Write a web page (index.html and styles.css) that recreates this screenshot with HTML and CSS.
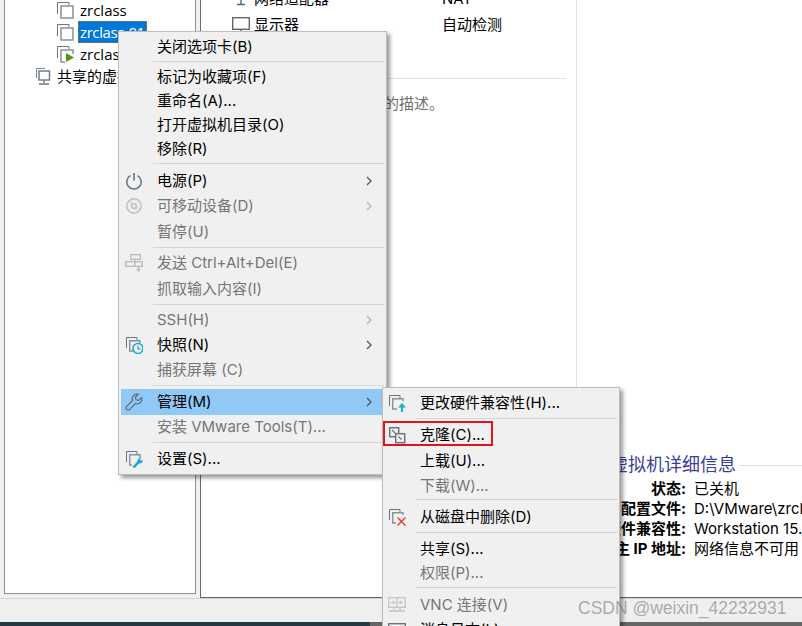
FILE: index.html
```html
<!DOCTYPE html>
<html lang="zh-CN">
<head>
<meta charset="utf-8">
<title>VMware Workstation</title>
<link rel="stylesheet" href="styles.css">
</head>
<body>
<svg class="defs" xmlns="http://www.w3.org/2000/svg">
  <symbol id="i-vm" viewBox="0 0 18 18"><path d="M1.5 13V1.5H13V4" fill="none" stroke="#6b7780"/><rect x="5" y="5" width="12" height="12" fill="#fff" stroke="#87929a" stroke-width="1.5"/></symbol>
  <symbol id="i-run" viewBox="0 0 18 18"><path d="M1.5 13V1.5H13V4" fill="none" stroke="#6b7780"/><path d="M9 17H5V5H17V9" fill="none" stroke="#87929a" stroke-width="1.5"/><path d="M10 8L18 12.5 10 17z" fill="#4f9a14"/></symbol>
  <symbol id="i-share" viewBox="0 0 18 18"><path d="M1.5 11V1.5H10" fill="none" stroke="#7b868e"/><rect x="4" y="4" width="10.5" height="9" fill="#fff" stroke="#6b7780" stroke-width="1.4"/><path d="M9 13v3M4 17h10" fill="none" stroke="#6b7780" stroke-width="1.4"/></symbol>
  <symbol id="i-mon" viewBox="0 0 18 18"><rect x=".7" y="1.7" width="16.6" height="11.6" fill="#fff" stroke="#5c6870" stroke-width="1.4"/><path d="M9 13v3M5 16.5h8" fill="none" stroke="#5c6870" stroke-width="1.4"/></symbol>
  <symbol id="i-net" viewBox="0 0 18 18"><path d="M1 4h16M4 7h10" fill="none" stroke="#6b7780" stroke-width="1.4" stroke-dasharray="2 1"/><path d="M9 8v6M5 14.5h8" fill="none" stroke="#5c6870" stroke-width="1.4"/></symbol>
  <symbol id="i-power" viewBox="0 0 18 18"><path d="M5.4 3.6a7.2 7.2 0 1 0 7.2 0M9 1v7.5" fill="none" stroke="#5f6e78" stroke-width="1.5"/></symbol>
  <symbol id="i-disc" viewBox="0 0 18 18"><circle cx="9" cy="9" r="7.2" fill="none" stroke="#bdbdbd" stroke-width="1.5"/><circle cx="9" cy="9" r="2.4" fill="none" stroke="#bdbdbd" stroke-width="1.4"/><path d="M5 8a4 4 0 0 1 3-3M13 10a4 4 0 0 1-3 3" fill="none" stroke="#d0d0d0"/></symbol>
  <symbol id="i-send" viewBox="0 0 18 18"><g fill="none" stroke="#bdbdbd" stroke-width="1.4"><rect x="5.7" y=".7" width="9.6" height="4.6"/><rect x=".7" y="7.7" width="9" height="4.6"/><rect x="9.7" y="7.7" width="7.6" height="4.6"/><path d="M10.500 5.500v2M13.500 12.500v4.500"/></g><path d="M11 15l2.500 3 2.500-3z" fill="#bdbdbd"/></symbol>
  <symbol id="i-snap" viewBox="0 0 18 18"><path d="M1.500 12V1.500H12V4" fill="none" stroke="#6b7780"/><path d="M8 15H4.700V4.700H15V7" fill="none" stroke="#87929a" stroke-width="1.400"/><circle cx="13" cy="12.500" r="5" fill="#f0f0f0" stroke="#1ba6d8" stroke-width="1.600"/><path d="M13 9.800v3h2.500" fill="none" stroke="#1ba6d8" stroke-width="1.200"/></symbol>
  <symbol id="i-wrench" viewBox="0 0 18 18"><path d="M12 1.200a4.700 4.700 0 0 0-4.500 6.300L1.700 13.300a2.100 2.100 0 0 0 3 3l5.800-5.800a4.700 4.700 0 0 0 6-6L13.600 7.400 11 6.800 10.400 4.200 13.300 1.400a4.700 4.700 0 0 0-1.300-.2z" fill="none" stroke="#5d6c76" stroke-width="1.200"/></symbol>
  <symbol id="i-set" viewBox="0 0 18 18"><path d="M1.500 12V1.500H12V4" fill="none" stroke="#6b7780"/><path d="M7 15H4.700V4.700H15V8" fill="none" stroke="#87929a" stroke-width="1.400"/><path d="M8.500 17.500l5-5.500" fill="none" stroke="#1ba6d8" stroke-width="2.600"/><path d="M12 12.500l1-3.500 3.500-1.500-1.500 2 1 1.200 2-1-1 3-3.500 1z" fill="#1ba6d8"/></symbol>
  <symbol id="i-up" viewBox="0 0 18 18"><path d="M1.500 12V1.500H12V4" fill="none" stroke="#6b7780"/><path d="M9 15H4.700V4.700H15V7" fill="none" stroke="#87929a" stroke-width="1.400"/><path d="M14 18v-6" fill="none" stroke="#19b0d8" stroke-width="2"/><path d="M10 13.500l4-4.500 4 4.500z" fill="#19b0d8"/></symbol>
  <symbol id="i-clone" viewBox="0 0 18 18"><g fill="#f0f0f0" stroke="#6a767e" stroke-width="1.500"><rect x="1.700" y="1.700" width="9" height="9"/><rect x="7.700" y="7.700" width="9" height="9"/></g><path d="M4 4l3 3M10.500 10.500l3 3" fill="none" stroke="#6a767e" stroke-width="1.300"/></symbol>
  <symbol id="i-del" viewBox="0 0 18 18"><path d="M1.500 12V1.500H12V4" fill="none" stroke="#6b7780"/><path d="M8 15H4.700V4.700H15V7" fill="none" stroke="#87929a" stroke-width="1.400"/><path d="M9.500 9.500l8 8M17.500 9.500l-8 8" fill="none" stroke="#e2453c" stroke-width="1.500"/></symbol>
  <symbol id="i-vnc" viewBox="0 0 18 18"><g fill="none" stroke="#c4c4c4" stroke-width="1.300"><rect x=".7" y="1.700" width="16.600" height="9.600"/><path d="M9 2v9M3 6.500h4M11 6.500h4M1 15h16M6 11v4M12 11v4"/></g><path d="M7.500 6.500L5 4.500v4zM10.500 6.500L13 4.500v4z" fill="#c4c4c4"/></symbol>
  <symbol id="i-log" viewBox="0 0 18 18"><rect x=".7" y="2.700" width="16.600" height="14" fill="none" stroke="#6b7780" stroke-width="1.400"/></symbol>
</svg>

<div class="app">
  <div class="panes">
    <nav class="tree">
      <div class="node vm"><svg class="ico"><use href="#i-vm"/></svg><span class="label">zrclass</span></div>
      <div class="node vm"><svg class="ico"><use href="#i-vm"/></svg><span class="label selected">zrclass-01</span></div>
      <div class="node vm"><svg class="ico"><use href="#i-run"/></svg><span class="label">zrclass-02</span></div>
      <div class="node shared"><svg class="ico"><use href="#i-share"/></svg><span class="label">共享的虚拟机</span></div>
    </nav>
    <main class="detail">
      <section class="summary">
        <div class="spec"><svg class="ico"><use href="#i-net"/></svg><span class="spec-name">网络适配器</span><span>NAT</span></div>
        <div class="spec"><svg class="ico"><use href="#i-mon"/></svg><span class="spec-name">显示器</span><span>自动检测</span></div>
        <hr class="rule">
        <p class="desc">在此处键入对该虚拟机的描述。</p>
      </section>
      <section class="info">
        <div class="info-head"><h2>虚拟机详细信息</h2><span class="info-line"></span></div>
        <dl class="info-grid">
          <dt>状态:</dt><dd>已关机</dd>
          <dt>配置文件:</dt><dd>D:\VMware\zrclass-01\zrclass-01.vmx</dd>
          <dt>硬件兼容性:</dt><dd>Workstation 15.x 虚拟机</dd>
          <dt>主 IP 地址:</dt><dd>网络信息不可用</dd>
        </dl>
      </section>
    </main>
  </div>
  <footer class="status"></footer>
  <div class="taskbar"></div>
</div>

<ul class="menu main-menu">
  <li class="item"><span class="slot"></span>关闭选项卡(B)</li>
  <li class="sep"></li>
  <li class="item"><span class="slot"></span>标记为收藏项(F)</li>
  <li class="item"><span class="slot"></span>重命名(A)...</li>
  <li class="item"><span class="slot"></span>打开虚拟机目录(O)</li>
  <li class="item"><span class="slot"></span>移除(R)</li>
  <li class="sep roomy"></li>
  <li class="item t25h"><span class="slot"><svg class="ico"><use href="#i-power"/></svg></span>电源(P)<svg class="chev" viewBox="0 0 6 10"><path d="M1 1l4 4-4 4"/></svg></li>
  <li class="item t25h off"><span class="slot"><svg class="ico"><use href="#i-disc"/></svg></span>可移动设备(D)<svg class="chev" viewBox="0 0 6 10"><path d="M1 1l4 4-4 4"/></svg></li>
  <li class="item t25h off"><span class="slot"></span>暂停(U)</li>
  <li class="sep"></li>
  <li class="item t25h off"><span class="slot"><svg class="ico"><use href="#i-send"/></svg></span>发送 Ctrl+Alt+Del(E)</li>
  <li class="item t25h off"><span class="slot"></span>抓取输入内容(I)</li>
  <li class="sep"></li>
  <li class="item t25 off"><span class="slot"></span>SSH(H)<svg class="chev" viewBox="0 0 6 10"><path d="M1 1l4 4-4 4"/></svg></li>
  <li class="item t25"><span class="slot"><svg class="ico"><use href="#i-snap"/></svg></span>快照(N)<svg class="chev" viewBox="0 0 6 10"><path d="M1 1l4 4-4 4"/></svg></li>
  <li class="item t25 off"><span class="slot"></span>捕获屏幕 (C)</li>
  <li class="sep"></li>
  <li class="item t26 hover"><span class="slot"><svg class="ico"><use href="#i-wrench"/></svg></span>管理(M)<svg class="chev" viewBox="0 0 6 10"><path d="M1 1l4 4-4 4"/></svg></li>
  <li class="item t25 off"><span class="slot"></span>安装 VMware Tools(T)...</li>
  <li class="sep"></li>
  <li class="item t26"><span class="slot"><svg class="ico"><use href="#i-set"/></svg></span>设置(S)...</li>
</ul>

<ul class="menu sub-menu">
  <li class="item"><span class="slot"><svg class="ico"><use href="#i-up"/></svg></span>更改硬件兼容性(H)...</li>
  <li class="sep"></li>
  <li class="item t25"><span class="slot"><svg class="ico"><use href="#i-clone"/></svg></span>克隆(C)...</li>
  <li class="item t26 nudge"><span class="slot"></span>上载(U)...</li>
  <li class="item t23 off nudge"><span class="slot"></span>下载(W)...</li>
  <li class="sep"></li>
  <li class="item t26 nudge"><span class="slot"><svg class="ico"><use href="#i-del"/></svg></span>从磁盘中删除(D)</li>
  <li class="sep"></li>
  <li class="item nudge"><span class="slot"></span>共享(S)...</li>
  <li class="item off nudge"><span class="slot"></span>权限(P)...</li>
  <li class="sep"></li>
  <li class="item t26 off nudge"><span class="slot"><svg class="ico"><use href="#i-vnc"/></svg></span>VNC 连接(V)</li>
  <li class="item nudge"><span class="slot"><svg class="ico"><use href="#i-log"/></svg></span>消息日志(L)</li>
  <li class="callout"></li>
</ul>

<div class="watermark">CSDN @weixin_42232931</div>
</body>
</html>
```

FILE: styles.css
```css
* { box-sizing: border-box; }
html, body { margin: 0; height: 626px; overflow: hidden; }
body {
  position: relative;
  background: #f0f0f0;
  color: #000;
  font: 15px/22px Inter, "Noto Sans CJK SC", sans-serif;
}
.defs { display: none; }
.ico { display: block; width: 18px; height: 18px; flex: none; }

.app { display: flex; flex-direction: column; height: 626px; }
.panes { display: flex; height: 598px; padding-left: 4px; overflow: hidden; flex: none; }

.tree {
  width: 192px;
  height: 594px;
  margin-right: 4px;
  border: 1px solid #8b9197;
  border-top: 0;
  background: #fff;
  overflow: hidden;
  font-family: "Open Sans", "Noto Sans CJK SC", sans-serif;
}
.node { display: flex; align-items: center; height: 22px; gap: 4px; white-space: nowrap; }
.node:first-child { margin-top: -1px; }
.node.vm { padding-left: 51px; }
.node.vm .label { padding: 0 2px; }
.node.shared { padding-left: 30px; }
.label.selected { background: #0078d7; color: #fff; outline: 1px dotted #c96a00; outline-offset: -1px; letter-spacing: -.4px; }

.detail {
  display: flex;
  width: 602px;
  height: 598px;
  border-left: 1px solid #6a6a6a;
  border-bottom: 1px solid #666;
  background: #fff;
  overflow: hidden;
}
.summary { width: 376px; flex: none; border-right: 1px solid #e0e0e0; }
.spec { display: flex; align-items: center; height: 26px; padding: 2px 0 0 31px; }
.spec:first-child { margin-top: -15px; }
.spec .ico { margin-right: 4px; }
.spec-name { width: 188px; flex: none; }
.rule { height: 1px; margin: 41px 10px 0 28px; border: 0; background: #e0e0e0; }
.desc { margin: 13px 0 0; padding-left: 33px; line-height: 24px; color: #707070; }

.info { flex: 1; min-width: 0; padding-top: 453px; overflow: hidden; }
.info-head { display: flex; align-items: center; height: 24px; padding-left: 33px; }
.info-head h2 { margin: 0; font-size: 18px; font-weight: 400; color: #3d3d9e; white-space: nowrap; }
.info-line { flex: 1; height: 1px; margin-left: 3px; background: #e0e0e0; }
.info-grid { display: grid; grid-template-columns: 109px 1fr; column-gap: 8px; margin: 2px 0 0; line-height: 20px; }
.info-grid dt { font-weight: 700; text-align: right; white-space: nowrap; direction: rtl; unicode-bidi: plaintext; overflow: hidden; }
.info-grid dd { margin: 0; white-space: nowrap; overflow: hidden; }

.status { height: 24px; flex: none; border-top: 1px solid #d4d4d4; background: #efefef; }
.taskbar { flex: 1; background: linear-gradient(to right, #263a44 370px, #666 370px); }

.menu {
  position: absolute;
  margin: 0;
  padding: 3px 2px;
  list-style: none;
  background: #f0f0f0;
  border: 1px solid #bcbcbc;
  box-shadow: 3px 3px 4px rgba(0, 0, 0, .4);
}
.main-menu { left: 118px; top: 31px; width: 269px; height: 444px; }
.sub-menu { left: 382px; top: 387px; width: 238px; height: 270px; }

.item { display: flex; align-items: center; height: 24px; white-space: nowrap; }
.nudge { padding-top: 2px; }
.t23 { height: 23px; }
.t25 { height: 25px; }
.t25h { height: 25.5px; }
.t26 { height: 26px; }
.off { color: #767676; }
.hover { background: #90c8f6; }
.slot { display: block; width: 36px; height: 18px; padding-left: 4px; flex: none; }
.sub-menu .slot { width: 35px; padding-left: 3px; }
.chev { width: 6px; height: 10px; margin: 0 12px 0 auto; flex: none; }
.chev path { fill: none; stroke: #555; stroke-width: 1.300; }
.off .chev path { stroke: #b5b5b5; }
.sep { height: 1px; margin: 2px 0 3px 32px; background: #d5d5d5; }
.sep.roomy { margin-bottom: 4px; }
.sub-menu .sep { margin: 3px 0 3px 31px; }

.callout {
  position: absolute;
  left: 0;
  top: 33px;
  width: 110px;
  height: 25px;
  border: 2px solid #e0141e;
}

.watermark {
  position: absolute;
  left: 578px;
  top: 597px;
  font: 17.500px/22px "Liberation Sans", sans-serif;
  color: rgba(110, 110, 110, .55);
  white-space: nowrap;
}
```
